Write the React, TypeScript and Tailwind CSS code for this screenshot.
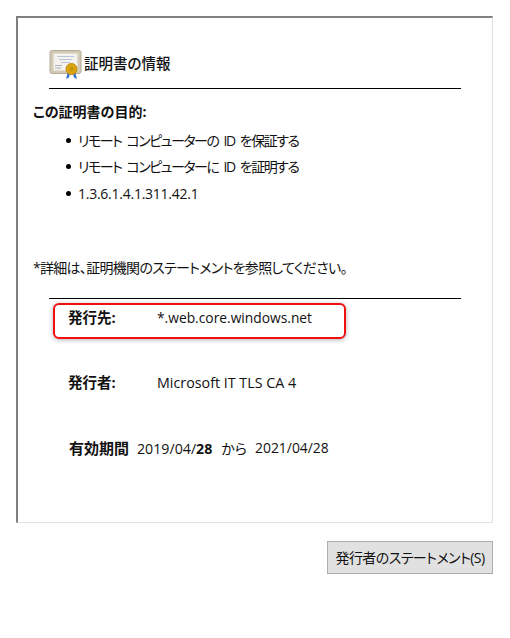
const font = { fontFamily: '"Open Sans", "Noto Sans CJK JP", sans-serif' };

function CertIcon() {
  return (
    <svg width="34" height="32" viewBox="0 0 34 32" className="shrink-0">
      <rect x="1" y="1.500" width="31" height="23" rx="2" fill="#d3cbb8" stroke="#b5ab95" />
      <rect x="4.500" y="4.500" width="24" height="17" fill="#f4f2ec" />
      <path d="M8 7.500h17M10 10.500h13M12 13.500h9" stroke="#bcc6d8" strokeWidth="1" />
      <path d="M6 16.500h7M6 19h6" stroke="#a9b2bd" strokeWidth="1" />
      <path d="M19 23l-2 7 3-1.500 1-4zM26 23l2 7-3-1.500-1-4z" fill="#2f6fd0" />
      <circle cx="22.500" cy="20" r="5.500" fill="#dca512" stroke="#c08a0c" />
      <circle cx="22.500" cy="20" r="2.500" fill="#c9970f" />
    </svg>
  );
}

function Bullet({ children, tight }: { children: React.ReactNode; tight?: boolean }) {
  return (
    <li className="flex items-center h-[26.5px]">
      <span className="w-[5px] h-[5px] rounded-full bg-black mr-[7px]" />
      <span className={tight ? "tracking-[-1.5px] [word-spacing:3px]" : "tracking-[-0.25px]"}>{children}</span>
    </li>
  );
}

export default function App() {
  return (
    <div style={font} className="w-[510px] h-[638px] bg-white text-[14px] text-[#111] overflow-hidden pt-4 pl-4 [font-feature-settings:'palt']">
      <div className="w-[477px] h-[507px] border-t-2 border-l-2 border-t-[#808080] border-l-[#808080] border-r border-b border-r-[#e0e0e0] border-b-[#e0e0e0] flex flex-col">
        <div className="ml-[31px] w-[412px] h-[71px] border-b border-black flex items-end pb-[7px] gap-[1px]">
          <CertIcon />
          <span className="text-[14.5px] font-medium mb-[6px] [font-feature-settings:'normal']">証明書の情報</span>
        </div>
        <div className="ml-[15px] mt-[12px] font-bold leading-[22px] [font-feature-settings:'normal']">この証明書の目的:</div>
        <ul className="ml-[48px] mt-[4px]">
          <Bullet tight>リモート コンピューターの ID を保証する</Bullet>
          <Bullet tight>リモート コンピューターに ID を証明する</Bullet>
          <Bullet>1.3.6.1.4.1.311.42.1</Bullet>
        </ul>
        <div className="ml-[15px] mt-[50px] leading-[22px] tracking-[-0.7px]">*詳細は、証明機関のステートメントを参照してください。</div>
        <div className="ml-[31px] w-[412px] mt-[19px] border-t border-black" />
        <div className="ml-[35px] mt-[4px] w-[293px] h-[36px] border-2 border-[#f01010] rounded-[6px] shadow-[0_1px_5px_rgba(0,0,0,0.3)] flex items-center pb-[5px]">
          <span className="ml-[13px] w-[89px] font-bold text-[14.5px]">発行先:</span>
          <span className="text-[13.8px]">*.web.core.windows.net</span>
        </div>
        <div className="ml-[50px] mt-[33px] h-[22px] flex items-center">
          <span className="w-[89px] font-bold text-[14.5px]">発行者:</span>
          <span className="text-[14.3px]">Microsoft IT TLS CA 4</span>
        </div>
        <div className="ml-[51px] mt-[44px] h-[22px] flex items-center">
          <span className="font-bold w-[68px] text-[15px]">有効期間</span>
          <span className="text-[14.2px]">2019/04/<b>28</b></span>
          <span className="ml-[9px]">から</span>
          <span className="ml-[8px] text-[13.9px]">2021/04/28</span>
        </div>
      </div>
      <div className="w-[477px] flex justify-end mt-[18px]">
        <button className="w-[166px] h-[33px] bg-[#e1e1e1] border border-[#adadad] text-[14px] text-[#111] whitespace-nowrap tracking-[-0.55px]">発行者のステートメント(S)</button>
      </div>
    </div>
  );
}
